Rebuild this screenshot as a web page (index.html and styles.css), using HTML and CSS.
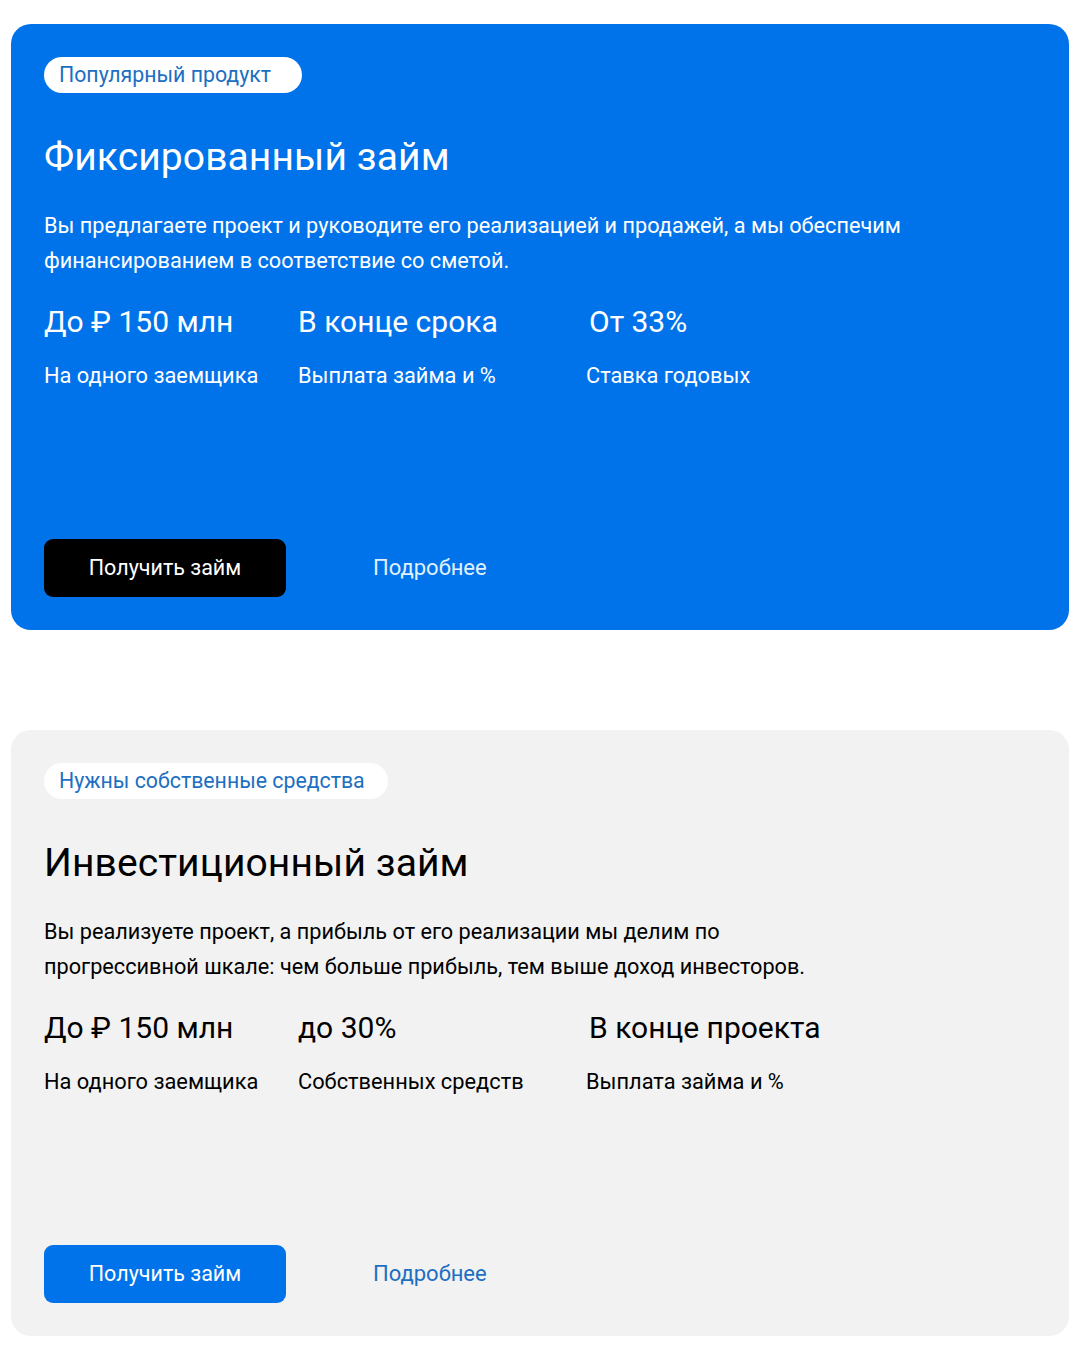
FILE: index.html
```html
<!DOCTYPE html>
<html lang="ru">
<head>
<meta charset="utf-8">
<title>Займы</title>
<link rel="stylesheet" href="styles.css">
</head>
<body>
<main class="list">
  <section class="card card--blue">
    <span class="pill">Популярный продукт</span>
    <h2 class="title">Фиксированный займ</h2>
    <p class="desc">Вы предлагаете проект и руководите его реализацией и продажей, а мы обеспечим финансированием в соответствие со сметой.</p>
    <div class="stats">
      <div class="stat"><div class="value">До ₽ 150 млн</div><div class="label">На одного заемщика</div></div>
      <div class="stat"><div class="value">В конце срока</div><div class="label">Выплата займа и %</div></div>
      <div class="stat"><div class="value">От 33%</div><div class="label">Ставка годовых</div></div>
    </div>
    <div class="actions">
      <a class="btn btn--dark" href="#">Получить займ</a>
      <a class="more" href="#">Подробнее</a>
    </div>
  </section>

  <section class="card card--gray">
    <span class="pill">Нужны собственные средства</span>
    <h2 class="title">Инвестиционный займ</h2>
    <p class="desc">Вы реализуете проект, а прибыль от его реализации мы делим по<br>прогрессивной шкале: чем больше прибыль, тем выше доход инвесторов.</p>
    <div class="stats">
      <div class="stat"><div class="value">До ₽ 150 млн</div><div class="label">На одного заемщика</div></div>
      <div class="stat"><div class="value">до 30%</div><div class="label">Собственных средств</div></div>
      <div class="stat"><div class="value">В конце проекта</div><div class="label">Выплата займа и %</div></div>
    </div>
    <div class="actions">
      <a class="btn btn--blue" href="#">Получить займ</a>
      <a class="more" href="#">Подробнее</a>
    </div>
  </section>
</main>
</body>
</html>
```

FILE: styles.css
```css
* { box-sizing: border-box; }
html, body { margin: 0; padding: 0; background: #ffffff; }
body {
  font-family: Roboto, "Noto Sans", "Liberation Sans", sans-serif;
  -webkit-font-smoothing: antialiased;
}
.list {
  display: flex;
  flex-direction: column;
  gap: 100px;
  padding: 24px 11px 0 11px;
}
.card {
  height: 606px;
  border-radius: 20px;
  padding: 33px;
  display: flex;
  flex-direction: column;
  align-items: flex-start;
}
.card--blue { background: #0073ea; color: #ffffff; }
.card--gray { background: #f2f2f2; color: #000000; }

.pill {
  display: inline-flex;
  align-items: center;
  height: 36px;
  padding: 0 31px 0 15px;
  border-radius: 18px;
  background: #ffffff;
  color: #1c6fc1;
  font-size: 21.3px;
  line-height: 1;
}
.card--gray .pill { padding-right: 23px; }

.title {
  margin: 40px 0 0 0;
  font-size: 39px;
  line-height: 48px;
  font-weight: 400;
  letter-spacing: 0.1px;
}
.desc {
  margin: 27px 0 0 0;
  font-size: 21.7px;
  line-height: 35px;
  max-width: 960px;
}
.stats {
  margin-top: 24px;
  display: grid;
  grid-template-columns: 254px 288px auto;
}
.value {
  font-size: 30px;
  line-height: 40px;
}
.label {
  margin-top: 20px;
  font-size: 21.8px;
  line-height: 28px;
}
.stat:nth-child(3) .value { padding-left: 3px; }

.actions {
  margin-top: auto;
  display: flex;
  align-items: center;
  gap: 87px;
}
.btn {
  display: flex;
  align-items: center;
  justify-content: center;
  width: 242px;
  height: 58px;
  border-radius: 9px;
  color: #ffffff;
  font-size: 21.5px;
  line-height: 1;
  padding-bottom: 1px;
  text-decoration: none;
}
.btn--dark { background: #000000; }
.btn--blue { background: #0073ea; }
.more {
  font-size: 22px;
  line-height: 1;
  padding-bottom: 1px;
  text-decoration: none;
}
.card--blue .more { color: #e0f1ff; }
.card--gray .more { color: #1c6fc1; }
```
